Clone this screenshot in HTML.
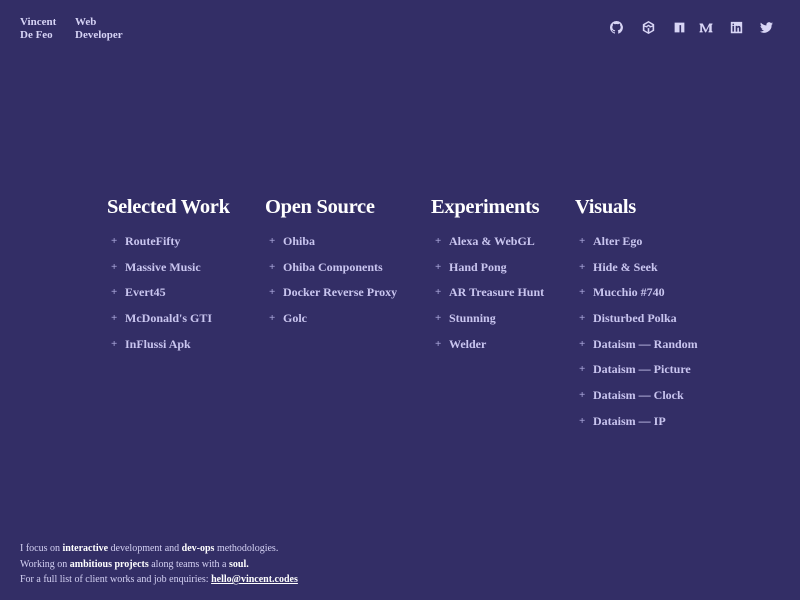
<!DOCTYPE html>
<html><head><meta charset="utf-8"><style>
*{margin:0;padding:0;box-sizing:border-box}
body{width:800px;height:600px;background:#332e66;font-family:"Liberation Serif",serif;color:#c9c5ef;position:relative;overflow:hidden}
.h{position:absolute;top:16px;font-size:11px;font-weight:bold;line-height:12.5px;color:#d6d3f5}
.icons{position:absolute;top:21px;}
.icons svg{position:absolute;width:13px;height:13px;fill:#d8d5f5}
.col{position:absolute;top:194px}
.col h2{font-size:20.5px;color:#fff;font-weight:bold;letter-spacing:-0.3px;line-height:26px;margin-bottom:14px}
.col ul{list-style:none}
.col li{font-size:12px;font-weight:bold;height:25.7px;line-height:14px;padding-left:18px;position:relative}
.col li:before{content:"+";position:absolute;left:4px;top:0;font-size:11px;color:#a9a5d9}
.foot{position:absolute;left:20px;top:541px;font-size:10px;line-height:15.5px;color:#d4d1f3}
.foot b{color:#fff}
.foot u{color:#fff;font-weight:bold}
</style></head><body>
<div class="h" style="left:20px">Vincent<br>De Feo</div>
<div class="h" style="left:75px">Web<br>Developer</div>
<div class="icons">
<svg style="left:610px" viewBox="0 0 16 16"><path d="M8 0a8 8 0 0 0-2.5 15.6c.4 0 .5-.2.5-.4v-1.5c-2.2.5-2.700-1-2.700-1-.4-.9-.9-1.200-.9-1.200-.7-.5.1-.5.1-.5.8.1 1.200.8 1.200.8.7 1.300 1.900.9 2.300.7.1-.5.3-.9.5-1.100-1.800-.2-3.600-.9-3.600-4 0-.9.3-1.600.8-2.100-.1-.2-.4-1 .1-2.100 0 0 .7-.2 2.200.8a7.500 7.500 0 0 1 4 0c1.500-1 2.200-.8 2.200-.8.4 1.100.2 1.900.1 2.100.5.6.8 1.300.8 2.100 0 3.100-1.900 3.800-3.600 4 .3.3.6.8.6 1.500v2.200c0 .2.1.5.6.4A8 8 0 0 0 8 0z"/></svg>
<svg style="left:642px" viewBox="0 0 16 16"><path d="M8 0L1 4v8l7 4 7-4V4zm0 2l5 3-2 1.3L8 4.5 5 6.3 3 5zm-1 6.5v5L3 11V7zm2 0l4-1.5v4l-4 2.5zM8 6.5l2 1.2-2 1.2-2-1.2z"/></svg>
<svg style="left:673px" viewBox="0 0 16 16"><path d="M2 2h12v12h-4V5H8v9H2z"/></svg>
<svg style="left:699px;width:14px" viewBox="0 0 16 16"><path d="M0 3h4l4 8 4-8h4v1l-1 1v7l1 1v1h-5v-1l1-1V6l-4 8h-1L3 6v6l1 1v1H0v-1l1-1V5L0 4z"/></svg>
<svg style="left:730px" viewBox="0 0 16 16"><path d="M1 1h14v14H1zm2 5v7h2V6zm1-3a1 1 0 1 0 0 2 1 1 0 0 0 0-2zm3 3v7h2V9c0-1 2-1.500 2 0v4h2V8.500c0-3-3-3-4-1.500V6z"/></svg>
<svg style="left:760px" viewBox="0 0 16 16"><path d="M16 3a6.600 6.600 0 0 1-1.900.5 3.300 3.300 0 0 0 1.400-1.800 6.600 6.600 0 0 1-2 .8A3.300 3.300 0 0 0 7.900 5.500 9.300 9.300 0 0 1 1.100 2a3.300 3.300 0 0 0 1 4.400 3.300 3.300 0 0 1-1.500-.4 3.300 3.300 0 0 0 2.600 3.200 3.300 3.300 0 0 1-1.500.1 3.300 3.300 0 0 0 3.100 2.300A6.600 6.600 0 0 1 0 13a9.300 9.300 0 0 0 14.300-8.300A6.700 6.700 0 0 0 16 3z"/></svg>
</div>
<div class="col" style="left:107px"><h2>Selected Work</h2><ul><li>RouteFifty</li><li>Massive Music</li><li>Evert45</li><li>McDonald's GTI</li><li>InFlussi Apk</li></ul></div>
<div class="col" style="left:265px"><h2>Open Source</h2><ul><li>Ohiba</li><li>Ohiba Components</li><li>Docker Reverse Proxy</li><li>Golc</li></ul></div>
<div class="col" style="left:431px"><h2>Experiments</h2><ul><li>Alexa &amp; WebGL</li><li>Hand Pong</li><li>AR Treasure Hunt</li><li>Stunning</li><li>Welder</li></ul></div>
<div class="col" style="left:575px"><h2>Visuals</h2><ul><li>Alter Ego</li><li>Hide &amp; Seek</li><li>Mucchio #740</li><li>Disturbed Polka</li><li>Dataism — Random</li><li>Dataism — Picture</li><li>Dataism — Clock</li><li>Dataism — IP</li></ul></div>
<div class="foot">I focus on <b>interactive</b> development and <b>dev-ops</b> methodologies.<br>Working on <b>ambitious projects</b> along teams with a <b>soul.</b><br>For a full list of client works and job enquiries: <u>hello@vincent.codes</u></div>
</body></html>
